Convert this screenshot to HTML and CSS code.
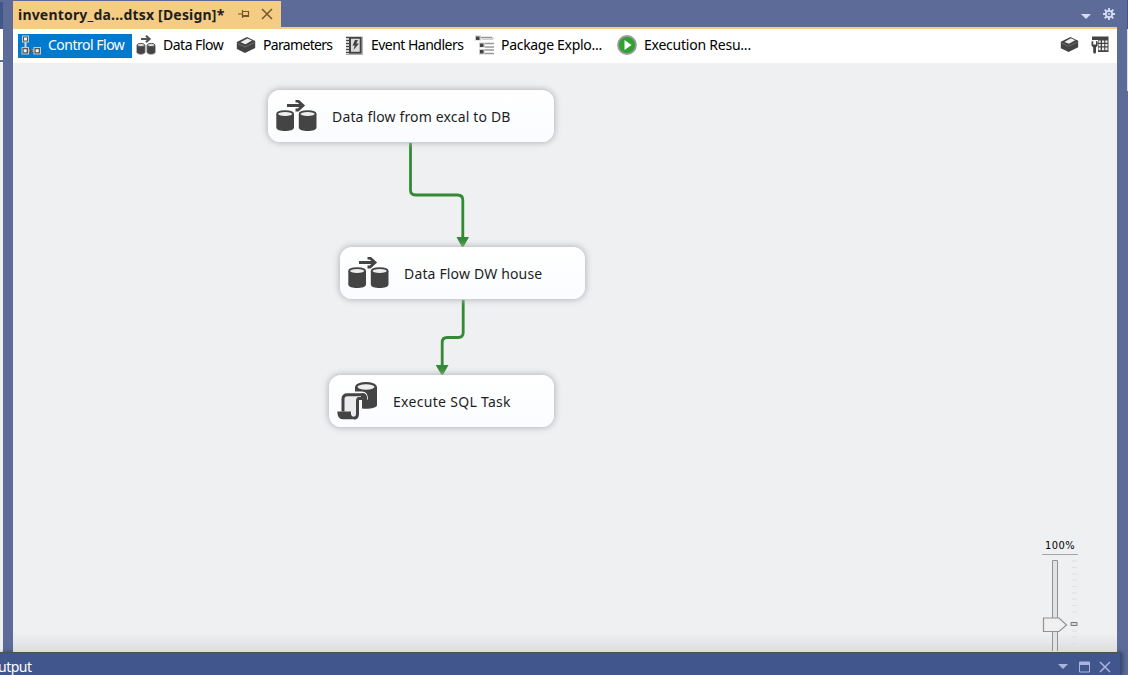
FILE: index.html
```html
<!DOCTYPE html>
<html lang="en">
<head>
<meta charset="utf-8">
<title>inventory_da...dtsx [Design]*</title>
<link rel="stylesheet" href="styles.css">
</head>
<body>
<svg width="0" height="0" class="defs">
  <defs>
    <symbol id="flow" viewBox="0 0 42 32">
      <path d="M11 5.500h14.500M19.500 1h2.500l5 4.500-5 4.500h-2.500" fill="none" stroke="#444" stroke-width="2.800"/>
      <path d="M.3 14v13.500c0 4.800 17.700 4.800 17.700 0V14zM22.800 14v13.500c0 4.800 17.700 4.800 17.700 0V14z" fill="#444"/>
      <ellipse cx="9.150" cy="14" rx="8" ry="2.900" fill="#eee" stroke="#444" stroke-width="1.700"/>
      <ellipse cx="31.650" cy="14" rx="8" ry="2.900" fill="#eee" stroke="#444" stroke-width="1.700"/>
    </symbol>
    <symbol id="box" viewBox="0 0 20 18">
      <path d="M.8 6L11 1l8.200 4v7L9 17l-8.200-4z" fill="#444"/>
      <path d="M4.500 6.300l7-3.800 4.500 2-6.500 3.800z" fill="#eee"/>
      <path d="M1.500 7.500L9 11l9.500-4.500" fill="none" stroke="#777" stroke-width=".8"/>
    </symbol>
  </defs>
</svg>
<div class="window">
  <div class="workspace">
    <div class="neighbor"><div class="neighbor-head"></div><div class="neighbor-bar"></div></div>
    <main class="document">
      <header class="doc-tabs">
        <div class="doc-tab">
          <span class="doc-title">inventory_da...dtsx [Design]*</span>
          <svg class="pin" width="12" height="10" viewBox="0 0 12 10"><path d="M0 5h4M4.500 1v8M5 2.500h5.500v5H5M5 6.500h5" fill="none" stroke="#75572b" stroke-width="1.200"/></svg>
          <svg class="close" width="12" height="12" viewBox="0 0 12 12"><path d="M1 1l10 10M11 1L1 11" stroke="#75572b" stroke-width="1.500"/></svg>
        </div>
        <div class="doc-actions">
          <svg width="10" height="5" viewBox="0 0 10 5"><path d="M0 0h10L5 5z" fill="#d5def7"/></svg>
          <svg width="12" height="12" viewBox="0 0 12 12"><path d="M6 0v12M0 6h12M1.700 1.700l8.600 8.600M10.300 1.700l-8.600 8.600" stroke="#d5def7" stroke-width="1.900"/><circle cx="6" cy="6" r="3.200" fill="#5d6b99" stroke="#d5def7" stroke-width="1.800"/><circle cx="6" cy="6" r="1" fill="#d5def7"/></svg>
        </div>
      </header>
      <nav class="views">
        <div class="view view-control active">
          <svg width="20" height="20" viewBox="0 0 20 20"><path d="M4.500 7v6M8 15.500h5" stroke="#d8d8d8" stroke-width="2"/><path d="M1 .5h7v7H1zM.5 12h7.500v7.500H.5zM12.500 12H20v7.500h-7.500z" fill="#c8c8c8"/><path d="M2 1.500h5v5H2zM1.500 13h5.500v5.500H1.500zM13.500 13H19v5.500h-5.500z" fill="#555"/><path d="M3 2.500h3v3H3zM2.700 14.200h3v3h-3zM14.700 14.200h3v3h-3z" fill="#f4f4f4"/><path d="M8.500 13l4 2.700-4 2.700z" fill="#555"/></svg>
          <span>Control Flow</span>
        </div>
        <div class="view view-data"><svg width="20" height="20" viewBox="0 0 20 20"><path d="M5 4h9M10 .8L13.500 4 10 7.200" fill="none" stroke="#555" stroke-width="2.200"/><path d="M.5 10v7c0 3.200 8.800 3.200 8.800 0v-7zM10.700 10v7c0 3.200 8.800 3.200 8.800 0v-7z" fill="#444" stroke="#bbb" stroke-width=".7"/><ellipse cx="4.900" cy="10" rx="3.700" ry="1.600" fill="#ddd" stroke="#555"/><ellipse cx="15.100" cy="10" rx="3.700" ry="1.600" fill="#ddd" stroke="#555"/></svg><span>Data Flow</span></div>
        <div class="view view-params"><svg width="20" height="18"><use href="#box"/></svg><span>Parameters</span></div>
        <div class="view view-events"><svg width="18" height="19" viewBox="0 0 18 19"><path d="M17.400 .5v18H1" fill="none" stroke="#aaa"/><path d="M1 1.500h3M1 4.500h3M1 7.500h3M1 10.500h3M1 13.500h3M1 16.500h3" stroke="#444" stroke-width="1.500"/><path d="M5 1.800h10.700v15H5z" fill="#ddd" stroke="#444" stroke-width="2"/><path d="M10 4l3 0-1.700 3.500H14L8.500 14l1.200-4.500H7.500z" fill="#444"/></svg><span>Event Handlers</span></div>
        <div class="view view-package"><svg width="20" height="20" viewBox="0 0 20 20"><path d="M0 .5h6v5H0zM4 7.500h6v5H4zM4 14h6v5.500H4z" fill="#ccc"/><path d="M1 1.500h3.500V5H1zM5 8.500h3.500V12H5zM5 15h3.500v3.500H5z" fill="#444"/><path d="M6 2.500h11M10 8.500h9M10 12h9M10 15h9M10 18.500h9" stroke="#999" stroke-width="1.400"/><path d="M7 4.200h11v-2" fill="none" stroke="#bbb"/></svg><span>Package Explo...</span></div>
        <div class="view view-exec"><svg width="20" height="20" viewBox="0 0 20 20"><circle cx="10" cy="10" r="9" fill="#33a033" stroke="#9a9a9a" stroke-width="1.800"/><path d="M7.500 5l7 5-7 5z" fill="#fff"/></svg><span>Execution Resu...</span></div>
        <div class="view-tools">
          <svg width="19" height="17"><use href="#box"/></svg>
          <svg width="18" height="18" viewBox="0 0 18 18"><path d="M1 .5h16.500V15H7v-2h3" fill="none"/><path d="M1 .5h16.500V16H7V4H1z" fill="#444"/><path d="M7.500 4.500h2.200v2.200H7.500zM11 4.500h2.200v2.200H11zM14.300 4.500h2.200v2.200h-2.200zM7.500 8h2.200v2.200H7.500zM11 8h2.200v2.200H11zM14.300 8h2.200v2.200h-2.200zM7.500 11.500h2.200v2.700H7.500zM11 11.500h2.200v2.700H11zM14.300 11.500h2.200v2.700h-2.200z" fill="#eee"/><path d="M.5 5.500v4l1.700 2V16c0 2 2.800 2 2.800 0v-4.500l1.700-2v-4l-1.700-.5v3.500H2.200V5z" fill="#444"/></svg>
        </div>
      </nav>
      <section class="canvas">
        <svg class="links" width="1104" height="589" viewBox="0 0 1104 589">
          <g fill="none" stroke="#338a33" stroke-width="2.800"><path d="M397.500 80v47q0 5 5 5h42q5.300 0 5.300 5v39"/><path d="M450.200 237v32.500q0 5-5 5h-11q-5 0-5 5v25"/></g>
          <path d="M443.500 174h12.500L451 183q-1.300 2-2.600 0zM422.700 302H435.500L430.500 311q-1.300 2-2.600 0z" fill="#338a33"/>
        </svg>
        <div class="task task-excel"><svg width="42" height="32"><use href="#flow"/></svg><span>Data flow from excal to DB</span></div>
        <div class="task task-house"><svg width="42" height="32"><use href="#flow"/></svg><span>Data Flow DW house</span></div>
        <div class="task task-sql"><svg width="42" height="40" viewBox="0 0 42 40"><path d="M18 6v18c0 5 22 5 22 0V6z" fill="#444"/><ellipse cx="29" cy="6" rx="9.700" ry="3.900" fill="#eee" stroke="#444" stroke-width="2.400"/><path d="M3 33V16q0-5.500 5-5.500h17q6 0 6 8h-6v17H3z" fill="#fafafa"/><path d="M7 31V18q0-3 3-3h12q-2 2-2 5v14q-2 3-5 0v-3z" fill="#ececee"/><path d="M6 30.500V18q0-4.300 4.500-4.300H25q3.500 0 3.500 3.800h-6.500q-1.500 0-1.500 2.500v13q0 4-3.500 4" fill="none" stroke="#444" stroke-width="3"/><path d="M24 12.200h2q4 0 4 5.800h-6z" fill="#444"/><path d="M.3 30.500h13.700v2q0 3 3.500 3.500l1 2.300H5.500q-5 0-5.200-7.800z" fill="#444"/></svg><span>Execute SQL Task</span></div>
        <div class="zoom">
          <div class="zoom-value">100%</div>
          <svg width="36" height="96" viewBox="0 0 36 96"><path d="M10.500 5.500h5V97h-5z" fill="#e1e2e4" stroke="#929292"/><path d="M30 6h5M30 12.500h5M30 19h5M30 25h5M30 31.500h5M30 38h5M30 44h5M30 50.500h5M30 57h5M30 76h5M30 82h5M30 88.500h5M30 95h5" stroke="#dedfe1"/><path d="M1.500 63H17l7.500 7-7.500 6.500H1.500z" fill="#f0f0f1" stroke="#929292" stroke-width="1.200"/><path d="M29 67.500h6v3h-6z" fill="#ddd" stroke="#777"/></svg>
        </div>
      </section>
    </main>
    <div class="right-edge"></div>
  </div>
  <footer class="output"><span>utput</span>
    <svg width="54" height="12" viewBox="0 0 54 12"><path d="M0 3h10L5 8z" fill="#a9b6dc"/><path d="M21.500 1h10v10h-10z" fill="none" stroke="#a9b6dc"/><path d="M21 1h11v3H21z" fill="#a9b6dc"/><path d="M42 1l10 10M52 1L42 11" stroke="#a9b6dc" stroke-width="1.500"/></svg>
  </footer>
</div>
</body>
</html>
```
FILE: styles.css
```css
* { box-sizing: border-box; }
body { margin: 0; overflow: hidden; font-family: "Noto Sans", sans-serif; font-size: 14px; color: #000; }
svg { display: block; flex: none; }
.defs { position: absolute; }
.window { width: 1128px; height: 675px; background: #5d6b99; display: flex; flex-direction: column; }
.workspace { display: flex; height: 652px; }
.neighbor { width: 3px; margin-right: 10px; background: #eff0f2; border-top: 2px solid #5d6b99; }
.neighbor-head { height: 27px; background: #40568d; }
.neighbor-bar { height: 33px; background: #fff; border-bottom: 2px solid #5d6b99; }
.document { width: 1104px; display: flex; flex-direction: column; }
.doc-tabs { height: 29px; padding-top: 1px; border-bottom: 2px solid #f5cc84; display: flex; justify-content: space-between; }
.doc-tab { width: 268px; background: #f5cc84; display: flex; align-items: center; padding-left: 5px; }
.doc-title { width: 220px; margin-top: 1px; font-weight: 700; font-size: 14px; line-height: 20px; letter-spacing: .19px; white-space: nowrap; color: #1e1e1e; }
.pin { margin-right: 11px; }
.doc-actions { display: flex; align-items: center; gap: 12px; padding-right: 2px; }
.doc-actions svg:first-child { margin-top: 4px; }
.views { height: 34px; background: #fff; padding-left: 5px; display: flex; align-items: center; }
.view { height: 24px; display: flex; align-items: center; padding-left: 3px; gap: 7px; white-space: nowrap; line-height: 20px; }
.view svg { margin-top: -2px; }
.view span { margin-top: -2px; }
.view-control { width: 114px; letter-spacing: -.5px; }
.active { background: #007acc; color: #fff; }
.view-data { width: 101px; padding-left: 4px; letter-spacing: -.5px; }
.view-params { width: 109px; letter-spacing: -.67px; }
.view-events { width: 130px; gap: 8px; letter-spacing: -.52px; }
.view-package { width: 142px; gap: 6px; letter-spacing: -.3px; }
.view-exec { width: 150px; letter-spacing: -.23px; }
.view-tools { margin-left: auto; display: flex; align-items: center; gap: 12px; padding-right: 8px; margin-top: -3px; }
.canvas { height: 589px; background: linear-gradient(#eff0f2 570px, #dcdde0 589px); position: relative; }
.links { position: absolute; left: 0; top: 0; }
.task { position: absolute; height: 52px; border-radius: 12px; background: linear-gradient(#fff, #fafcff); box-shadow: 0 0 6px 1px #b5b7ba; display: flex; align-items: center; padding-left: 8px; gap: 14px; white-space: nowrap; color: #1e1e1e; }
.task span { line-height: 20px; margin-top: 2px; }
.task-excel { left: 255px; top: 27px; width: 286px; letter-spacing: .16px; }
.task-house { left: 327px; top: 184px; width: 245px; letter-spacing: .16px; }
.task-sql { left: 316px; top: 312px; width: 225px; letter-spacing: .3px; }
.task-excel svg, .task-house svg { margin-left: 0; }
.zoom { position: absolute; left: 1029px; top: 474px; width: 36px; height: 115px; overflow: hidden; }
.zoom-value { height: 18px; border-bottom: 1px solid #a3a5a8; font-size: 11px; line-height: 17px; letter-spacing: .45px; text-align: center; font-family: "DejaVu Sans Condensed", "DejaVu Sans", sans-serif; }
.right-edge { width: 1px; margin-left: 10px; height: 652px; background: linear-gradient(#40568d 29px, #d9deed 29px, #d9deed 91px, #5d6b99 91px); }
.output { width: 1121px; height: 23px; background: #40568d; border-top: 1px solid #505050; border-right: 1px solid #384b7b; box-shadow: 2px 0 4px #38466e; color: #fff; display: flex; justify-content: space-between; align-items: center; padding-right: 8px; }
.output span { line-height: 20px; margin-left: -2px; margin-top: 5px; letter-spacing: -.5px; }
.output svg { margin-top: 5px; }
```
